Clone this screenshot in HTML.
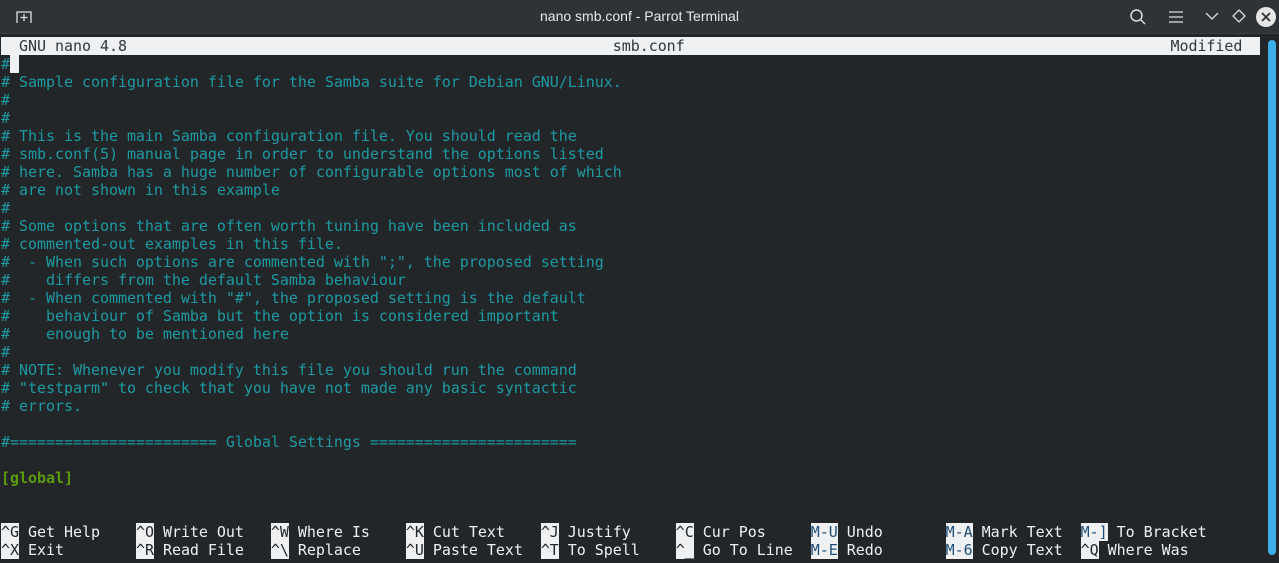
<!DOCTYPE html>
<html><head><meta charset="utf-8"><style>
*{margin:0;padding:0;box-sizing:border-box}
body{width:1279px;height:563px;overflow:hidden;background:#232629;position:relative;font-family:"DejaVu Sans Mono","Liberation Mono",monospace;font-size:15px;letter-spacing:-0.035px}
#tb{position:absolute;left:0;top:0;width:1279px;height:34px;background:#2f3337;border-bottom:1px solid #3a3f44}
#title{position:absolute;left:0;width:1279px;top:8px;text-align:center;color:#e8e8e8;font-family:"Liberation Sans",sans-serif;font-size:14px;letter-spacing:0}
.r{position:absolute;left:1px;height:18px;line-height:18px;white-space:pre;color:#1d9aa1}
#hdr{position:absolute;left:1px;top:37px;width:1259px;height:18px;background:#eff0f1;color:#31363b;line-height:18px;white-space:pre}
.k{background:#eff0f1;color:#232629}
.m{background:#eff0f1;color:#1f4e7a}
.s{color:#eff0f1}
#sb{position:absolute;left:1268px;top:40px;width:8px;height:515px;background:#3daee9;border-radius:4px}
#cur{position:absolute;left:10px;top:55px;width:9px;height:18px;background:#eff0f1}
</style></head><body>
<div id="tb">
<svg style="position:absolute;left:16px;top:10px" width="16" height="14" viewBox="0 0 16 14"><path d="M1 13V2h14v11M8 4v7M4.5 7.5h7" stroke="#ddd" stroke-width="1.3" fill="none"/></svg>
<div id="title">nano smb.conf - Parrot Terminal</div>
<svg style="position:absolute;left:1129px;top:8px" width="18" height="18" viewBox="0 0 18 18"><circle cx="7.5" cy="7.5" r="5.5" stroke="#ddd" stroke-width="1.5" fill="none"/><path d="M11.5 11.5L16 16" stroke="#ddd" stroke-width="1.5"/></svg>
<svg style="position:absolute;left:1168px;top:10px" width="16" height="14" viewBox="0 0 16 14"><path d="M1 2h14M1 7h14M1 12h14" stroke="#ddd" stroke-width="1.3"/></svg>
<svg style="position:absolute;left:1205px;top:11px" width="14" height="10" viewBox="0 0 14 10"><path d="M1 2l6 6 6-6" stroke="#ddd" stroke-width="1.3" fill="none"/></svg>
<svg style="position:absolute;left:1232px;top:9px" width="14" height="14" viewBox="0 0 14 14"><path d="M7 1l6 6-6 6-6-6z" stroke="#ddd" stroke-width="1.3" fill="none"/></svg>
<svg style="position:absolute;left:1255px;top:6px" width="22" height="22" viewBox="0 0 22 22"><circle cx="11" cy="11" r="10" fill="#e6e6e6"/><path d="M7 7l8 8M15 7l-8 8" stroke="#2f3337" stroke-width="1.8"/></svg>
</div>
<div id="hdr">  GNU nano 4.8                                                      smb.conf                                                      Modified</div>
<div id="cur"></div>
<div class="r" style="top:55px">#</div>
<div class="r" style="top:73px"># Sample configuration file for the Samba suite for Debian GNU/Linux.</div>
<div class="r" style="top:91px">#</div>
<div class="r" style="top:109px">#</div>
<div class="r" style="top:127px"># This is the main Samba configuration file. You should read the</div>
<div class="r" style="top:145px"># smb.conf(5) manual page in order to understand the options listed</div>
<div class="r" style="top:163px"># here. Samba has a huge number of configurable options most of which</div>
<div class="r" style="top:181px"># are not shown in this example</div>
<div class="r" style="top:199px">#</div>
<div class="r" style="top:217px"># Some options that are often worth tuning have been included as</div>
<div class="r" style="top:235px"># commented-out examples in this file.</div>
<div class="r" style="top:253px">#  - When such options are commented with ";", the proposed setting</div>
<div class="r" style="top:271px">#    differs from the default Samba behaviour</div>
<div class="r" style="top:289px">#  - When commented with "#", the proposed setting is the default</div>
<div class="r" style="top:307px">#    behaviour of Samba but the option is considered important</div>
<div class="r" style="top:325px">#    enough to be mentioned here</div>
<div class="r" style="top:343px">#</div>
<div class="r" style="top:361px"># NOTE: Whenever you modify this file you should run the command</div>
<div class="r" style="top:379px"># "testparm" to check that you have not made any basic syntactic</div>
<div class="r" style="top:397px"># errors.</div>
<div class="r" style="top:433px">#======================= Global Settings =======================</div>
<div class="r" style="top:469px;color:#5b9a0c;font-weight:bold">[global]</div>
<div class="r s" style="top:523px"><span class="k">^G</span> Get Help    <span class="k">^O</span> Write Out   <span class="k">^W</span> Where Is    <span class="k">^K</span> Cut Text    <span class="k">^J</span> Justify     <span class="k">^C</span> Cur Pos     <span class="m">M-U</span> Undo       <span class="m">M-A</span> Mark Text  <span class="m">M-]</span> To Bracket</div>
<div class="r s" style="top:541px"><span class="k">^X</span> Exit        <span class="k">^R</span> Read File   <span class="k">^\</span> Replace     <span class="k">^U</span> Paste Text  <span class="k">^T</span> To Spell    <span class="k">^_</span> Go To Line  <span class="m">M-E</span> Redo       <span class="m">M-6</span> Copy Text  <span class="k">^Q</span> Where Was</div>
<div id="sb"></div>
</body></html>
